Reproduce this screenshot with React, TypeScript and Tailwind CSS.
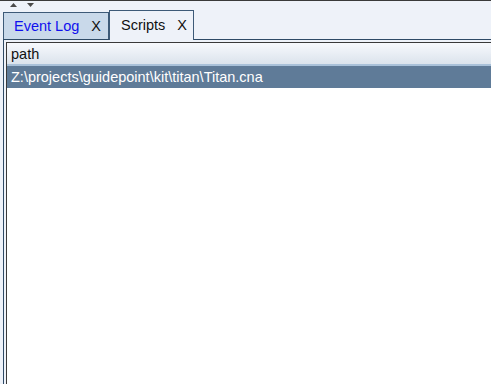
import React from 'react';

const font = { fontFamily: '"Liberation Sans", Arial, sans-serif' };

// Tab config
const tabs = [
  { label: 'Event Log', active: false },
  { label: 'Scripts', active: true },
];

const rows = ['Z:\\projects\\guidepoint\\kit\\titan\\Titan.cna'];

const App: React.FC = () => {
  return (
    <div className="w-[491px] h-[384px] bg-[#eef2f9] border-t border-[#3a3a3a] overflow-hidden flex flex-col" style={font}>
      {/* Split pane arrows */}
      <div className="h-[8px] flex items-start gap-[10px] pl-[10px] pt-[2px]">
        <svg width="7" height="4" viewBox="0 0 7 4"><path d="M0 4 L3.5 0 L7 4 Z" fill="#4a4a4a" /></svg>
        <svg width="7" height="4" viewBox="0 0 7 4"><path d="M0 0 L7 0 L3.5 4 Z" fill="#4a4a4a" /></svg>
      </div>

      {/* Tabs */}
      <div className="flex items-end pl-[3px] h-[30px] relative z-10">
        {tabs.map((t) =>
          t.active ? (
            <div key={t.label} className="h-[30px] -mb-px w-[85px] bg-[#eef2f9] border border-b-0 border-[#3d5a78] flex items-center pt-px pl-[11px] text-[14.5px] text-[#111]">
              <span>{t.label}</span>
              <span className="ml-[12px]">X</span>
            </div>
          ) : (
            <div key={t.label} className="h-[27px] w-[106px] bg-[#c9d9ea] border border-b-0 border-[#3d5a78] flex items-center pt-[2px] pl-[10px] text-[14.5px] text-[#1010ee]">
              <span>{t.label}</span>
              <span className="ml-[12px] text-[#111]">X</span>
            </div>
          )
        )}
      </div>

      {/* Panel */}
      <div className="flex-1 ml-[3px] border-l border-t border-[#2e4a66] pt-[2px] pl-[2px] flex flex-col">
        <div className="flex-1 bg-white border-l border-t border-[#3a3a3a] flex flex-col">
          <div className="h-[23px] bg-gradient-to-b from-[#f7f9fd] to-[#dbe3ec] border-b-2 border-[#a9c1d9] flex items-center pt-[3px] pl-[4px] text-[14.5px] text-[#111]">
            path
          </div>
          {rows.map((r) => (
            <div key={r} className="h-[22px] bg-[#5f7b98] text-white flex items-center pt-[2px] pl-[4px] text-[14.5px]">
              {r}
            </div>
          ))}
        </div>
      </div>
    </div>
  );
};

export default App;
